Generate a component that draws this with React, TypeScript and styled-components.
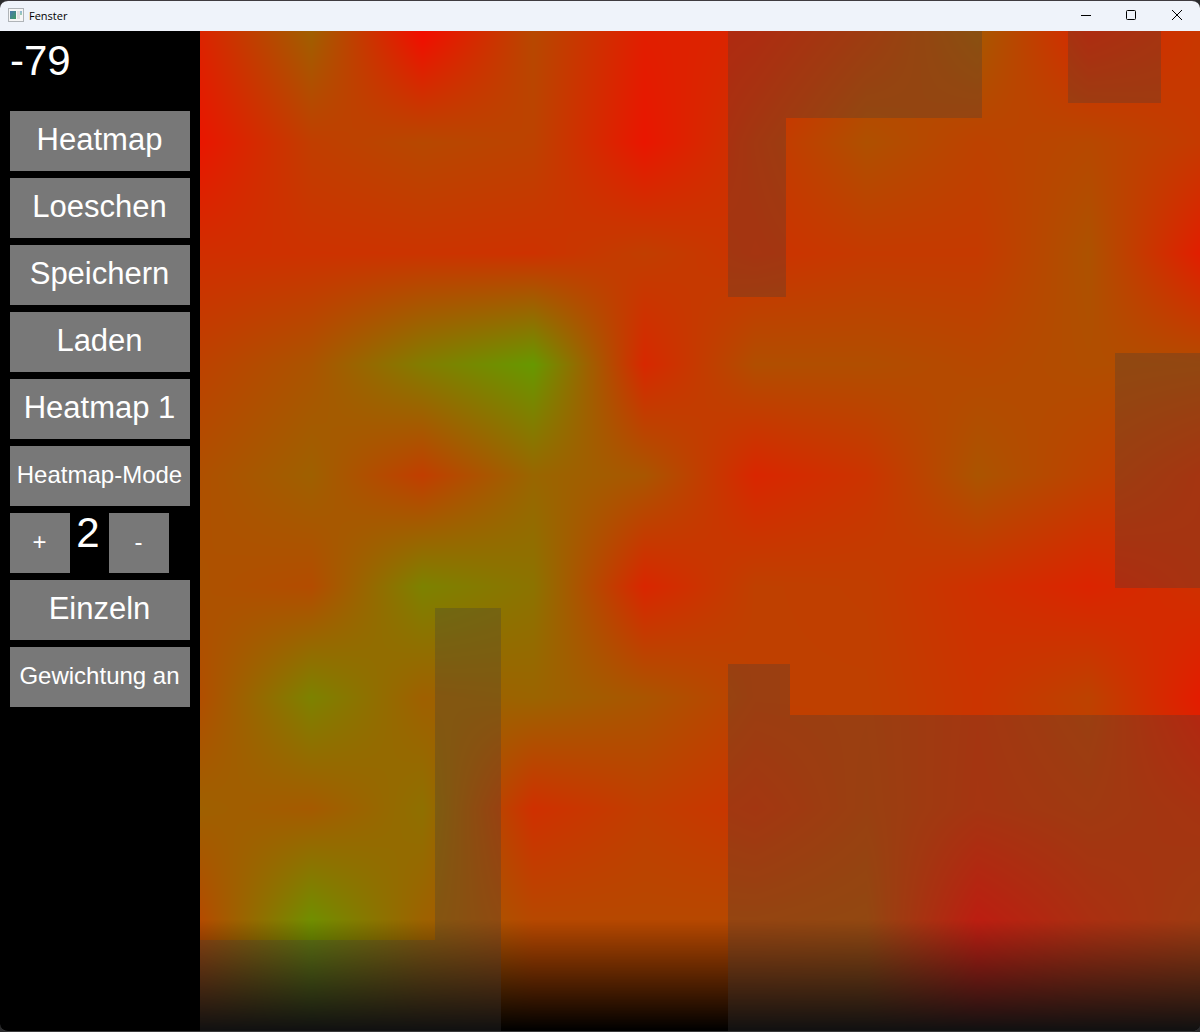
import React, { useLayoutEffect, useRef, useState } from "react";
import styled, { createGlobalStyle } from "styled-components";

const GlobalStyle = createGlobalStyle`
  * { box-sizing: border-box; }
  html { background: #2b2b2d; }
  body { margin: 0; background: #2b2b2d; font-family: "Liberation Sans", Arial, sans-serif; }
`;

const Frame = styled.div`
  display: flex;
  flex-direction: column;
  min-height: 100vh;
  border-top: 1px solid #3f3b40;
  border-bottom: 1px solid #39393a;
  border-radius: 8px;
  overflow: hidden;
  background: #000;
`;

const TitleBar = styled.header`
  display: flex;
  align-items: center;
  height: 30px;
  padding-left: 8px;
  gap: 5px;
  background: #eff3fa;
`;

const Title = styled.h1`
  flex: 1;
  margin: 0;
  font: 400 11px/16px "Open Sans", "Noto Sans", sans-serif;
  color: #000;
`;

const CaptionButtons = styled.div`
  display: flex;
`;

const CaptionButton = styled.button`
  display: grid;
  place-items: center;
  width: 46px;
  height: 30px;
  padding: 0;
  border: 0;
  background: transparent;
  color: #000;
`;

const Content = styled.main`
  display: flex;
  flex: 1;
  min-height: 0;
`;

const Sidebar = styled.nav`
  display: flex;
  flex-direction: column;
  flex: none;
  gap: 7px;
  width: 200px;
  padding: 10px;
  color: #fff;
`;

const Reading = styled.output`
  display: block;
  height: 63px;
  font-size: 42px;
  line-height: 40px;
`;

const SideButton = styled.button<{ $small?: boolean; $square?: boolean }>`
  display: flex;
  align-items: center;
  justify-content: center;
  width: ${(p) => (p.$square ? "60px" : "100%")};
  height: 60px;
  padding: 0 1px 2px 0;
  border: 0;
  background: #787878;
  color: #fff;
  font-family: inherit;
  font-size: ${(p) => (p.$small ? "24px" : "31px")};
  line-height: 36px;
  white-space: nowrap;
`;

const Stepper = styled.div`
  display: flex;
`;

const StepValue = styled.output`
  width: 39px;
  padding-right: 3px;
  font-size: 42px;
  line-height: 40px;
  text-align: center;
`;

const Plot = styled.canvas`
  display: block;
  flex: 1;
  min-width: 0;
  width: 100%;
  height: calc(100vh - 32px);
`;

const CELL = 111;
const SIZE = 1000;

/* Green share of every measuring point; red is the complement. */
const LEVELS = [
  [36, 95, 12, 72, 30, 38, 60, 88, 38, 55],
  [22, 62, 72, 66, 22, 54, 80, 66, 72, 58],
  [46, 50, 52, 50, 62, 50, 58, 58, 82, 30],
  [66, 84, 125, 152, 40, 78, 78, 72, 78, 76],
  [80, 96, 62, 102, 86, 38, 52, 84, 66, 50],
  [82, 76, 130, 115, 38, 64, 62, 48, 36, 48],
  [78, 130, 96, 100, 85, 64, 64, 52, 66, 28],
  [96, 90, 112, 48, 62, 52, 66, 50, 57, 48],
  [75, 142, 98, 72, 72, 72, 76, 18, 42, 58],
];

const WALLS = [
  [528, 0, 254, 87],
  [528, 87, 58, 179],
  [868, 0, 93, 72],
  [915, 322, 85, 235],
  [235, 577, 66, 423],
  [0, 909, 235, 91],
  [528, 633, 62, 51],
  [528, 684, 472, 316],
];

function point(col: number, row: number): [number, number] {
  const line = LEVELS[row];
  if (!line) return [0, 0];
  const g = line[Math.min(col, line.length - 1)];
  return [255 - g, g];
}

function drawPlot(ctx: CanvasRenderingContext2D) {
  const image = ctx.createImageData(SIZE, SIZE);
  for (let y = 0; y < SIZE; y++) {
    const row = Math.floor(y / CELL);
    const v = y / CELL - row;
    for (let x = 0; x < SIZE; x++) {
      const col = Math.floor(x / CELL);
      const u = x / CELL - col;
      const a = point(col, row);
      const b = point(col + 1, row);
      const c = point(col, row + 1);
      const d = point(col + 1, row + 1);
      const i = (y * SIZE + x) * 4;
      for (let k = 0; k < 2; k++) {
        const top = a[k] + (b[k] - a[k]) * u;
        const bottom = c[k] + (d[k] - c[k]) * u;
        image.data[i + k] = top + (bottom - top) * v;
      }
      image.data[i + 3] = 255;
    }
  }
  ctx.putImageData(image, 0, 0);
  ctx.fillStyle = "rgba(60, 60, 60, 0.28)";
  WALLS.forEach(([x, y, w, h]) => ctx.fillRect(x, y, w, h));
}

function Heatmap() {
  const ref = useRef<HTMLCanvasElement>(null);
  useLayoutEffect(() => {
    const ctx = ref.current?.getContext("2d");
    if (ctx) drawPlot(ctx);
  }, []);
  return <Plot ref={ref} width={SIZE} height={SIZE} role="img" aria-label="Heatmap" />;
}

function AppIcon() {
  return (
    <svg width="16" height="16" viewBox="0 0 16 16" aria-hidden="true">
      <defs>
        <linearGradient id="pane" x1="0" y1="0" x2="1" y2="1">
          <stop offset="0" stopColor="#4a78b0" />
          <stop offset="1" stopColor="#3f9a60" />
        </linearGradient>
        <linearGradient id="strip" x1="0" y1="0" x2="0" y2="1">
          <stop offset="0" stopColor="#8fb4d8" />
          <stop offset="1" stopColor="#9ccfae" />
        </linearGradient>
      </defs>
      <rect x="0.5" y="0.5" width="15" height="13" fill="#f6f6f6" stroke="#b0b4b8" />
      <rect x="2" y="3" width="6" height="8" fill="url(#pane)" />
      <rect x="9" y="3" width="3" height="8" fill="#e0e0e0" />
      <rect x="12" y="3" width="2" height="4" fill="url(#strip)" />
    </svg>
  );
}

function CaptionIcon({ children }: { children: React.ReactNode }) {
  return (
    <svg width="12" height="12" viewBox="0 0 12 12" stroke="currentColor" fill="none" aria-hidden="true">
      {children}
    </svg>
  );
}

export default function App() {
  const [step, setStep] = useState(2);
  return (
    <>
      <GlobalStyle />
      <Frame>
        <TitleBar>
          <AppIcon />
          <Title>Fenster</Title>
          <CaptionButtons>
            <CaptionButton aria-label="Minimieren">
              <CaptionIcon><path d="M2 5.5H12" /></CaptionIcon>
            </CaptionButton>
            <CaptionButton aria-label="Maximieren">
              <CaptionIcon><rect x="1.5" y="0.5" width="9" height="9" rx="1" /></CaptionIcon>
            </CaptionButton>
            <CaptionButton aria-label="Schließen">
              <CaptionIcon><path d="M1 0L11 10M11 0L1 10" /></CaptionIcon>
            </CaptionButton>
          </CaptionButtons>
        </TitleBar>
        <Content>
          <Sidebar>
            <Reading>-79</Reading>
            <SideButton>Heatmap</SideButton>
            <SideButton>Loeschen</SideButton>
            <SideButton>Speichern</SideButton>
            <SideButton>Laden</SideButton>
            <SideButton>Heatmap 1</SideButton>
            <SideButton $small>Heatmap-Mode</SideButton>
            <Stepper>
              <SideButton $square $small onClick={() => setStep(step + 1)}>+</SideButton>
              <StepValue>{step}</StepValue>
              <SideButton $square $small onClick={() => setStep(step - 1)}>-</SideButton>
            </Stepper>
            <SideButton>Einzeln</SideButton>
            <SideButton $small>Gewichtung an</SideButton>
          </Sidebar>
          <Heatmap />
        </Content>
      </Frame>
    </>
  );
}
